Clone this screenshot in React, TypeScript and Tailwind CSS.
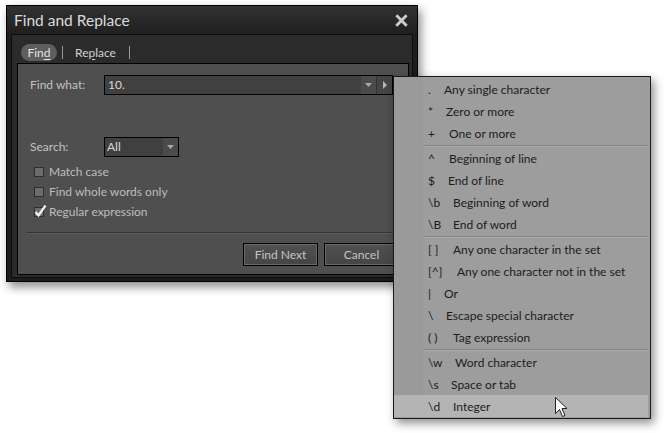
import React from 'react';

type Item = { sym: string; label: string; symW: string; active?: boolean };

const groups: Item[][] = [
  [
    { sym: '.', label: 'Any single character', symW: 'w-[16px]' },
    { sym: '*', label: 'Zero or more', symW: 'w-[18px]' },
    { sym: '+', label: 'One or more', symW: 'w-[21px]' },
  ],
  [
    { sym: '^', label: 'Beginning of line', symW: 'w-[21px]' },
    { sym: '$', label: 'End of line', symW: 'w-[20px]' },
    { sym: '\\b', label: 'Beginning of word', symW: 'w-[25px]' },
    { sym: '\\B', label: 'End of word', symW: 'w-[25px]' },
  ],
  [
    { sym: '[ ]', label: 'Any one character in the set', symW: 'w-[25px]' },
    { sym: '[^]', label: 'Any one character not in the set', symW: 'w-[29px]' },
    { sym: '|', label: 'Or', symW: 'w-[16px]' },
    { sym: '\\', label: 'Escape special character', symW: 'w-[18px]' },
    { sym: '( )', label: 'Tag expression', symW: 'w-[25px]' },
  ],
  [
    { sym: '\\w', label: 'Word character', symW: 'w-[27px]' },
    { sym: '\\s', label: 'Space or tab', symW: 'w-[23px]' },
    { sym: '\\d', label: 'Integer', symW: 'w-[25px]', active: true },
  ],
];

const DownArrow = () => (
  <svg width="7" height="4" viewBox="0 0 7 4">
    <path d="M0 0 L7 0 L3.5 4 Z" fill="#a8a8a8" />
  </svg>
);

const CheckBox = ({ checked, label }: { checked?: boolean; label: string }) => (
  <div className="flex items-center h-[20px] pl-[16px]">
    <div className="relative w-[10px] h-[10px] border border-[#2e2e2e] bg-[#6c6c6c]">
      {checked && (
        <svg className="absolute -left-[1px] -top-[4px]" width="13" height="14" viewBox="0 0 13 14">
          <path d="M1.5 8 L4.5 11.5 L11.5 1.5" fill="none" stroke="#f2f2f2" strokeWidth="2.2" />
        </svg>
      )}
    </div>
    <span className="ml-[5px] text-[#bdbdbd]">{label}</span>
  </div>
);

const DarkButton = ({ children }: { children: React.ReactNode }) => (
  <div className="w-[75px] h-[23px] border border-black bg-gradient-to-b from-[#505050] to-[#454545] shadow-[inset_0_0_0_1px_#686868] flex items-center justify-center text-[#c4c4c4]">
    {children}
  </div>
);

export default function App() {
  return (
    <div className="relative w-[664px] h-[433px] bg-white overflow-hidden font-['Lato','Open_Sans',sans-serif] text-[12px] leading-none">
      {/* dialog window */}
      <div className="ml-[6px] mt-[5px] w-[412px] h-[277px] border border-black bg-[#1d1d1d] shadow-[3px_5px_9px_rgba(0,0,0,0.45)] flex flex-col">
        <div className="h-[28px] bg-gradient-to-b from-[#333333] to-[#1f1f1f] flex items-center justify-between pl-[7px] pr-[9px]">
          <span className="text-[15.5px] text-[#dcdcdc] mt-[2px]">Find and Replace</span>
          <svg width="13" height="13" viewBox="0 0 14 14">
            <path d="M2 2 L12 12 M12 2 L2 12" stroke="#2a2a2a" strokeWidth="5" strokeLinecap="round" />
            <path d="M2.5 2.5 L11.5 11.5 M11.5 2.5 L2.5 11.5" stroke="#cfcfcf" strokeWidth="3" strokeLinecap="square" />
          </svg>
        </div>
        <div className="mx-[4px] mb-[1px] flex-1 border border-[#0c0c0c] bg-[#2b2b2b] flex flex-col">
          {/* tabs */}
          <div className="h-[28px] flex items-center pl-[9px] pt-[7px]">
            <div className="h-[17px] w-[36px] rounded-full bg-[#5e5e5e] flex items-center justify-center text-[#e2e2e2]">
              Fin<span className="underline underline-offset-2">d</span>
            </div>
            <div className="ml-[5px] w-px h-[13px] bg-[#9a9a9a]" />
            <div className="ml-[12px] text-[#d0d0d0]">
              Re<span className="underline underline-offset-2">p</span>lace
            </div>
            <div className="ml-[13px] w-px h-[13px] bg-[#9a9a9a]" />
          </div>
          {/* content panel */}
          <div className="ml-[5px] mr-[3px] mb-[2px] flex-1 border border-black bg-[#4f4f4f] flex flex-col">
            <div className="mt-[11px] flex items-center">
              <span className="w-[86px] pl-[12px] text-[#c2c2c2]">Find what:</span>
              <div className="w-[289px] h-[20px] border border-black bg-[#404040] flex items-stretch">
                <span className="flex-1 pl-[3px] flex items-center text-[#d8d8d8]">10.</span>
                <div className="w-[16px] bg-[#4b4b4b] flex items-center justify-center border-r border-[#333]">
                  <DownArrow />
                </div>
                <div className="w-[15px] bg-[#454545] flex items-center justify-center">
                  <svg width="4" height="8" viewBox="0 0 4 8">
                    <path d="M0 0 L4 4 L0 8 Z" fill="#b5b5b5" />
                  </svg>
                </div>
              </div>
            </div>
            <div className="mt-[42px] flex items-center">
              <span className="w-[86px] pl-[12px] text-[#c2c2c2]">Search:</span>
              <div className="w-[75px] h-[20px] border border-black bg-[#404040] flex items-stretch">
                <span className="flex-1 pl-[2px] flex items-center text-[#d8d8d8]">All</span>
                <div className="w-[15px] bg-[#4b4b4b] flex items-center justify-center">
                  <DownArrow />
                </div>
              </div>
            </div>
            <div className="mt-[5px] flex flex-col">
              <CheckBox label="Match case" />
              <CheckBox label="Find whole words only" />
              <CheckBox checked label="Regular expression" />
            </div>
            <div className="mt-[10px] ml-[8px] mr-[8px] h-[2px] border-t border-[#353535] border-b border-b-[#5a5a5a]" />
            <div className="mt-[9px] flex justify-end gap-[6px] pr-[9px]">
              <DarkButton>Find Next</DarkButton>
              <DarkButton>Cancel</DarkButton>
            </div>
          </div>
        </div>
        <div className="h-[2px]" />
      </div>

      {/* regex popup menu */}
      <div className="absolute left-[393px] top-[76px] w-[258px] h-[343px] border border-[#1a1a1a] bg-[#9d9d9d] shadow-[3px_4px_9px_rgba(0,0,0,0.45)] flex text-[#1c1c1c]">
        <div className="w-[29px] bg-[#9a9a9a]" />
        <div className="flex-1 pt-[1px] flex flex-col">
          {groups.map((g, gi) => (
            <div key={gi}>
              {gi > 0 && (
                <div className="h-[3px] flex flex-col justify-center mr-[3px]">
                  <div className="h-px bg-[#838383]" />
                  <div className="h-px bg-[#acacac]" />
                </div>
              )}
              {g.map((it) => (
                <div
                  key={it.label}
                  className={
                    'h-[22px] flex items-center pl-[5px] pt-[1px] -ml-[29px] ' +
                    (it.active ? 'bg-[#b4b4b4] mr-[2px]' : '')
                  }
                >
                  <span className="w-[29px]" />
                  <span className={it.symW + ' whitespace-pre'}>{it.sym}</span>
                  <span>{it.label}</span>
                </div>
              ))}
            </div>
          ))}
        </div>
      </div>

      {/* mouse cursor */}
      <svg className="absolute left-[555px] top-[397px]" width="13" height="21" viewBox="0 0 13 21">
        <path d="M0.5 0.5 L0.5 16.5 L4.5 12.5 L7.5 19.5 L10 18.5 L7 11.5 L12 11.5 Z" fill="#ffffff" stroke="#222" strokeWidth="1" strokeLinejoin="round" />
      </svg>
    </div>
  );
}
